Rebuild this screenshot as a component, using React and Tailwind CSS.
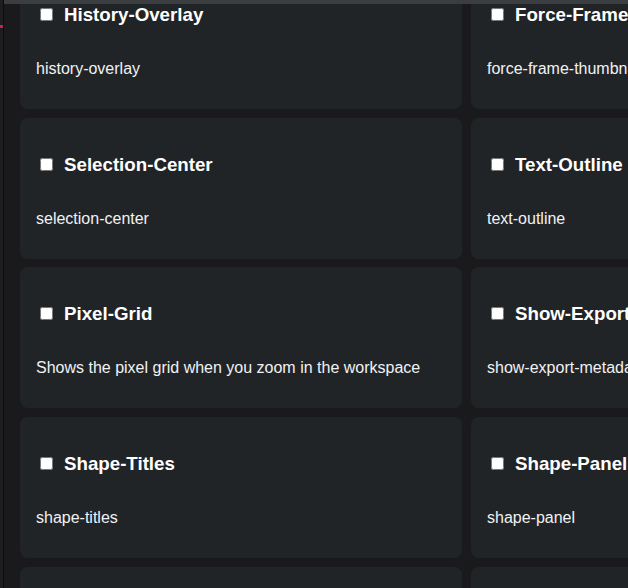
import React from 'react';

const FLAGS = [
  { name: 'History-Overlay', desc: 'history-overlay' },
  { name: 'Force-Frame-Thumbnail', desc: 'force-frame-thumbnail' },
  { name: 'Selection-Center', desc: 'selection-center' },
  { name: 'Text-Outline', desc: 'text-outline' },
  { name: 'Pixel-Grid', desc: 'Shows the pixel grid when you zoom in the workspace' },
  { name: 'Show-Export-Metadata', desc: 'show-export-metadata' },
  { name: 'Shape-Titles', desc: 'shape-titles' },
  { name: 'Shape-Panel', desc: 'shape-panel' },
  { name: 'Render-Wasm', desc: 'render-wasm' },
  { name: 'Tiles-Cache', desc: 'tiles-cache' },
];

const FlagCard = ({ name, desc }) => (
  <label className="flex flex-col rounded-lg bg-[#212427] px-4 pt-[33px] pb-7">
    <h3 className="flex items-center gap-[11px] pl-1 text-[18.72px] leading-[27px] font-bold text-white whitespace-nowrap">
      <input type="checkbox" className="h-[13px] w-[13px] shrink-0" />
      {name}
    </h3>
    <p className="mt-[29px] text-[16px] leading-6 text-[#f0f2f4] whitespace-nowrap">{desc}</p>
  </label>
);

export default function App() {
  return (
    <div
      className="flex h-screen w-full overflow-hidden bg-[#1a1a1c]"
      style={{ fontFamily: '"Liberation Sans", Arial, sans-serif' }}
    >
      {/* narrow rail */}
      <div className="w-[3px] shrink-0 border-r border-[#0b0b0c] bg-[#1e1e20] box-content">
        <div className="mt-[25px] h-[3px] w-[3px] bg-[#c0244f]" />
      </div>

      <div className="flex min-w-0 flex-1 flex-col">
        <div className="h-[4px] shrink-0 bg-[#3b3e41]" />
        <div className="flex-1 overflow-hidden">
          <div className="-mt-[36px] grid grid-cols-[442px_442px] gap-x-[9px] gap-y-[8.67px] pl-4">
            {FLAGS.map((f) => (
              <FlagCard key={f.name} {...f} />
            ))}
          </div>
        </div>
      </div>
    </div>
  );
}
